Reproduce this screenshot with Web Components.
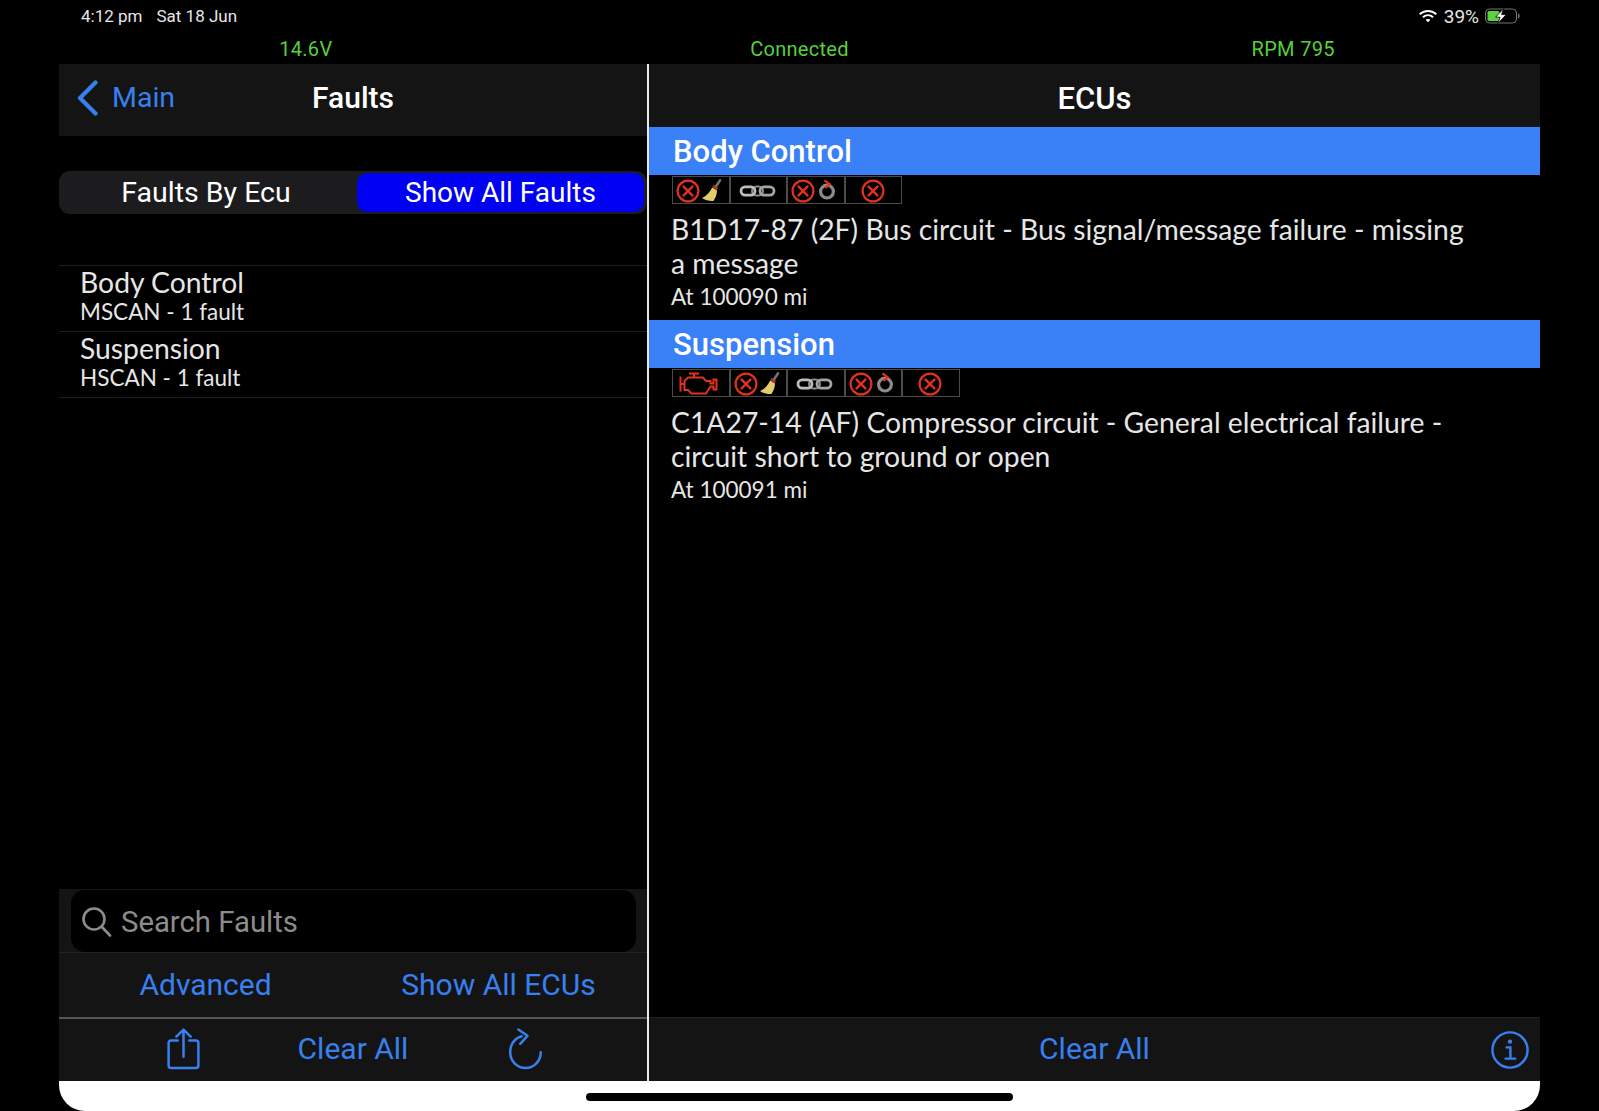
<!DOCTYPE html>
<html lang="en">
<head>
<meta charset="utf-8">
<title>Faults</title>
<style>
html, body { margin: 0; padding: 0; background: #000; }
body { width: 1599px; height: 1111px; overflow: hidden; font-family: Roboto, "Liberation Sans", sans-serif; }
</style>
</head>
<body>
<fault-app></fault-app>

<script>
const RED = '#e0321f';

function crossMark(cx, cy) {
    return `<circle cx="${cx}" cy="${cy}" r="10.4" fill="none" stroke="${RED}" stroke-width="2.2"/>
        <path d="M${cx - 4.4} ${cy - 4.4}L${cx + 4.4} ${cy + 4.4}M${cx + 4.4} ${cy - 4.4}L${cx - 4.4} ${cy + 4.4}" stroke="${RED}" stroke-width="2.4" stroke-linecap="round"/>`;
}

const BROOM = `
    <path d="M49 4.4L44.6 11" stroke="#77746e" stroke-width="2.6" stroke-linecap="round"/>
    <path d="M42 10L46.4 13" stroke="#b5342a" stroke-width="2.6"/>
    <path d="M41.2 11.4L46 14.6C46 18.4 44.4 22.4 42.4 25C38 25.2 34 24.2 31 22C35.4 20 39 16 41.2 11.4Z" fill="#e2cd6a"/>`;

const REDO = `
    <circle cx="41" cy="15.6" r="6.4" fill="none" stroke="#8b8b8b" stroke-width="3.2"/>
    <path d="M38.4 4.4L43.8 8.2L39.4 11.8" fill="none" stroke="${RED}" stroke-width="2.2"/>`;

const CHAIN = `
    <g fill="none" transform="translate(-1 0)">
        <rect x="24" y="10.6" width="11" height="8.8" rx="4.4" stroke="#8f8f8f" stroke-width="2"/>
        <rect x="13" y="10.8" width="14" height="8.4" rx="4.2" stroke="#bdbdbd" stroke-width="2.8"/>
        <rect x="32" y="10.8" width="14" height="8.4" rx="4.2" stroke="#a4a4a4" stroke-width="2.8"/>
    </g>`;

const ENGINE = `
    <path transform="translate(-1 0)" d="M10.5 7.5V22.5M10.5 15H14.5M19 4.5H29M24 4.5V8.5M14.5 12L18 8.5H33L36 12H40.5V14.5H43.5V10.5H46.5V20.5H43.5V17.5H40.5L36 24.5H21.5L18 21H14.5Z" fill="none" stroke="${RED}" stroke-width="2"/>`;

const ICONS = {
    wipe: crossMark(17, 15) + BROOM,
    chain: CHAIN,
    redo: crossMark(17, 15) + REDO,
    cross: crossMark(29, 15),
    engine: ENGINE
};

class DtcFlag extends HTMLElement {
    constructor() {
        super();
        this.attachShadow({ mode: 'open' });
    }

    connectedCallback() {
        const kind = this.getAttribute('kind');
        this.shadowRoot.innerHTML = `
            <style>
            :host { display: block; width: 57.6px; height: 28px; box-sizing: border-box; border: 1px solid #4b4b4b; }
            svg { display: block; margin: -1px -1px -1px -2px; }
            </style>
            <svg width="58" height="28" viewBox="0 0 58 28">${ICONS[kind]}</svg>`;
    }
}

class StatusBar extends HTMLElement {
    constructor() {
        super();
        this.attachShadow({ mode: 'open' });
        this.shadowRoot.innerHTML = `
            <style>
            :host { display: flex; justify-content: space-between; align-items: center; height: 32px; padding: 0 79px 0 81px; color: #e6e6e6; font: 400 17px Roboto, sans-serif; }
            .left { display: flex; gap: 14px; }
            .right { display: flex; align-items: center; gap: 6px; font-size: 19px; }
            </style>
            <div class="left"><span>4:12 pm</span><span>Sat 18 Jun</span></div>
            <div class="right">
                <svg width="20" height="14" viewBox="0 0 19 14" fill="none" stroke="#fff" stroke-width="2">
                    <path d="M1.2 5.2C6 .8 13 .8 17.8 5.2"/>
                    <path d="M4.4 8.3C7.4 5.6 11.6 5.6 14.6 8.3"/>
                    <path d="M9.5 13.2L7 10.8C8.4 9.8 10.6 9.8 12 10.8Z" fill="#fff" stroke="none"/>
                </svg>
                <span>39%</span>
                <svg width="35" height="16" viewBox="0 0 35 16">
                    <rect x=".5" y="1" width="31" height="14" rx="4" fill="none" stroke="#777"/>
                    <rect x="2.5" y="3" width="12" height="10" rx="1.6" fill="#5ed23e"/>
                    <path d="M33 5.5c1.2 .3 1.6 1.2 1.6 2.5s-.4 2.2-1.6 2.5z" fill="#777"/>
                    <path d="M18.5 .6L10.6 9.2H15L13 15.4L21.2 6.6H16.6Z" fill="#fff" stroke="#000" stroke-width=".8"/>
                </svg>
            </div>`;
    }
}

class GaugeBar extends HTMLElement {
    constructor() {
        super();
        this.attachShadow({ mode: 'open' });
        this.shadowRoot.innerHTML = `
            <style>
            :host { display: grid; grid-template-columns: repeat(3, 1fr); height: 32px; padding-top: 2px; box-sizing: border-box; align-items: center; text-align: center; color: #58cf3c; font: 400 20px Roboto, sans-serif; letter-spacing: .3px; }
            </style>
            <span>14.6V</span><span>Connected</span><span>RPM 795</span>`;
    }
}

class NavHeader extends HTMLElement {
    constructor() {
        super();
        this.attachShadow({ mode: 'open' });
        this.shadowRoot.innerHTML = `
            <style>
            :host { display: grid; grid-template-columns: 1fr auto 1fr; align-items: center; height: var(--nav-height, 72px); background: #141414; color: #fff; font: 500 var(--title-size, 30px) Roboto, sans-serif; }
            .back { padding-left: 18px; }
            .title { padding-bottom: var(--title-lift, 5px); padding-top: var(--title-drop, 0); }
            </style>
            <div class="back"><slot name="back"></slot></div>
            <div class="title"><slot></slot></div>
            <div></div>`;
    }
}

class BackLink extends HTMLElement {
    constructor() {
        super();
        this.attachShadow({ mode: 'open' });
        this.shadowRoot.innerHTML = `
            <style>
            :host { display: flex; align-items: center; gap: 13px; padding-bottom: 5px; color: #3880f0; font: 400 28.5px Roboto, sans-serif; }
            svg { display: block; }
            </style>
            <svg width="22" height="36" viewBox="0 0 22 36" fill="none" stroke="#3880f0" stroke-width="4.2" stroke-linecap="round" stroke-linejoin="round">
                <path d="M18.5 2.5L3 18L18.5 33.5"/>
            </svg>
            <slot></slot>`;
    }
}

class SegmentSwitch extends HTMLElement {
    constructor() {
        super();
        this.attachShadow({ mode: 'open' });
        this.shadowRoot.innerHTML = `
            <style>
            :host { display: grid; grid-template-columns: 1fr 287px; height: 43px; margin-top: 35px; border-radius: 11px; background: #1c1c1e; color: #fff; font: 400 28.5px Roboto, sans-serif; padding: 2px 3px; box-sizing: border-box; }
            div { display: flex; justify-content: center; align-items: center; border-radius: 10px; }
            .off { padding-right: 7px; }
            .on { background: #0000f2; font-size: 28px; }
            </style>
            <div class="off">Faults By Ecu</div>
            <div class="on">Show All Faults</div>`;
    }
}

class FaultRow extends HTMLElement {
    constructor() {
        super();
        this.attachShadow({ mode: 'open' });
        this.shadowRoot.innerHTML = `
            <style>
            :host { display: block; box-sizing: border-box; height: 66px; padding: 0 0 0 21px; border-top: 1px solid #1d1d1d; color: #e6e6e6; font-family: Lato, sans-serif; }
            .name { font-size: 28.3px; line-height: 32px; }
            .sub { font-size: 22.5px; line-height: 27px; }
            </style>
            <div class="name"><slot name="name"></slot></div>
            <div class="sub"><slot name="sub"></slot></div>`;
    }
}

class SearchBox extends HTMLElement {
    constructor() {
        super();
        this.attachShadow({ mode: 'open' });
        this.shadowRoot.innerHTML = `
            <style>
            :host { display: block; padding: 1px 11px 0 12px; background: #141414; }
            .field { display: flex; align-items: center; gap: 9px; height: 62px; padding-left: 10px; border-radius: 14px; background: #000; color: #8c8c8c; font: 400 29.3px Roboto, sans-serif; }
            span { padding-top: 2px; }
            svg { display: block; }
            </style>
            <div class="field">
                <svg width="31" height="31" viewBox="0 0 31 31" fill="none" stroke="#8c8c8c" stroke-width="2.6" stroke-linecap="round">
                    <circle cx="13" cy="13" r="10.5"/>
                    <path d="M21 21L29 29.5"/>
                </svg>
                <span><slot></slot></span>
            </div>`;
    }
}

class LinkRow extends HTMLElement {
    constructor() {
        super();
        this.attachShadow({ mode: 'open' });
        this.shadowRoot.innerHTML = `
            <style>
            :host { display: grid; grid-template-columns: 1fr 1fr; justify-items: center; align-items: center; height: 65px; box-sizing: border-box; padding: 0 2px 2px 0; border-top: 1px solid #222; background: #141414; color: #3880f0; font: 400 30px Roboto, sans-serif; }
            </style>
            <slot></slot>`;
    }
}

class ToolBar extends HTMLElement {
    constructor() {
        super();
        this.attachShadow({ mode: 'open' });
        this.shadowRoot.innerHTML = `
            <style>
            :host { display: grid; grid-template-columns: 170px 170px 170px; justify-content: center; justify-items: center; align-items: center; height: 64px; box-sizing: border-box; padding-bottom: 3px; border-top: 2px solid #555; background: #141414; color: #3880f0; font: 400 30px Roboto, sans-serif; }
            svg { display: block; }
            .redo { margin-left: 4px; }
            </style>
            <svg width="35" height="42" viewBox="0 0 36 44" fill="none" stroke="#3880f0" stroke-width="2.6" stroke-linecap="round" stroke-linejoin="round">
                <path d="M12 13H5C3.4 13 2.4 14 2.4 15.6V39.4C2.4 41 3.4 42 5 42H31C32.6 42 33.6 41 33.6 39.4V15.6C33.6 14 32.6 13 31 13H24"/>
                <path d="M18 30V2M10.5 9L18 1.6L25.5 9"/>
            </svg>
            <slot></slot>
            <svg class="redo" width="35" height="42" viewBox="0 0 36 44" fill="none" stroke="#3880f0" stroke-width="2.6" stroke-linecap="round" stroke-linejoin="round">
                <path d="M14 8.6C7 10.4 2 16.6 2 25.4C2 34.4 9 42 18 42C27 42 34 34.4 34 25.4"/>
                <path d="M10.5 1.6L20 8.2L12.5 16.6"/>
            </svg>`;
    }
}

class InfoBar extends HTMLElement {
    constructor() {
        super();
        this.attachShadow({ mode: 'open' });
        this.shadowRoot.innerHTML = `
            <style>
            :host { display: grid; grid-template-columns: 1fr auto 1fr; align-items: center; height: 64px; box-sizing: border-box; padding-bottom: 3px; border-top: 1px solid #222; background: #141414; color: #3880f0; font: 400 30px Roboto, sans-serif; }
            svg { display: block; justify-self: end; margin: 3px 11px 0 0; }
            </style>
            <span></span>
            <slot></slot>
            <svg width="38" height="38" viewBox="0 0 38 38" fill="none" stroke="#3880f0" stroke-linecap="round">
                <circle cx="19" cy="19" r="17.6" stroke-width="2.4"/>
                <circle cx="19" cy="10.6" r="2.2" fill="#3880f0" stroke="none"/>
                <path d="M15.6 16.4H19.4V27.4M14.6 27.6H24.2" stroke-width="2.4"/>
            </svg>`;
    }
}

class EcuSection extends HTMLElement {
    constructor() {
        super();
        this.attachShadow({ mode: 'open' });
        this.shadowRoot.innerHTML = `
            <style>
            :host { display: block; height: 193px; overflow: hidden; }
            .head { height: 48px; padding: 2px 0 0 24px; box-sizing: border-box; background: #3a80f6; color: #fff; font: 500 31px/46px Roboto, sans-serif; }
            .flags { display: flex; padding: 1px 0 0 23px; }
            .code { width: 806px; margin: 8px 0 0 22px; color: #e6e6e6; font: 400 28.3px/34px Lato, sans-serif; }
            .odo { margin: 2px 0 0 22px; color: #e6e6e6; font: 400 22.5px/30px Lato, sans-serif; }
            </style>
            <div class="head"><slot name="title"></slot></div>
            <div class="flags"><slot name="flags"></slot></div>
            <div class="code"><slot name="code"></slot></div>
            <div class="odo"><slot name="odo"></slot></div>`;
    }
}

class FaultApp extends HTMLElement {
    constructor() {
        super();
        this.attachShadow({ mode: 'open' });
        this.shadowRoot.innerHTML = `
            <style>
            :host { display: block; width: 1599px; height: 1111px; }
            .frame { margin: 0 59px; display: flex; flex-direction: column; }
            .panes { display: flex; height: 1017px; }
            .left { width: 588px; display: flex; flex-direction: column; }
            .rows { margin-top: 51px; border-bottom: 1px solid #1d1d1d; }
            .bottom { margin-top: auto; }
            .rule { width: 2px; background: #e8e8e8; }
            .right { flex: 1; display: flex; flex-direction: column; --nav-height: 63px; --title-lift: 0px; --title-drop: 5px; --title-size: 31px; }
            .scroll { flex: 1; }
            .home { display: flex; justify-content: center; height: 30px; margin: 0 59px; background: #fff; border-radius: 0 0 26px 26px; }
            .pill { width: 427px; height: 8px; margin-top: 12px; border-radius: 4px; background: #000; }
            </style>
            <status-bar></status-bar>
            <div class="frame">
                <gauge-bar></gauge-bar>
                <div class="panes">
                    <section class="left">
                        <nav-header><back-link slot="back">Main</back-link>Faults</nav-header>
                        <segment-switch></segment-switch>
                        <div class="rows">
                            <fault-row><span slot="name">Body Control</span><span slot="sub">MSCAN - 1 fault</span></fault-row>
                            <fault-row><span slot="name">Suspension</span><span slot="sub">HSCAN - 1 fault</span></fault-row>
                        </div>
                        <div class="bottom">
                            <search-box>Search Faults</search-box>
                            <link-row><span>Advanced</span><span>Show All ECUs</span></link-row>
                            <tool-bar>Clear All</tool-bar>
                        </div>
                    </section>
                    <div class="rule"></div>
                    <section class="right">
                        <nav-header>ECUs</nav-header>
                        <div class="scroll">
                            <ecu-section>
                                <span slot="title">Body Control</span>
                                <dtc-flag slot="flags" kind="wipe"></dtc-flag>
                                <dtc-flag slot="flags" kind="chain"></dtc-flag>
                                <dtc-flag slot="flags" kind="redo"></dtc-flag>
                                <dtc-flag slot="flags" kind="cross"></dtc-flag>
                                <span slot="code">B1D17-87 (2F) Bus circuit - Bus signal/message failure - missing a message</span>
                                <span slot="odo">At 100090 mi</span>
                            </ecu-section>
                            <ecu-section>
                                <span slot="title">Suspension</span>
                                <dtc-flag slot="flags" kind="engine"></dtc-flag>
                                <dtc-flag slot="flags" kind="wipe"></dtc-flag>
                                <dtc-flag slot="flags" kind="chain"></dtc-flag>
                                <dtc-flag slot="flags" kind="redo"></dtc-flag>
                                <dtc-flag slot="flags" kind="cross"></dtc-flag>
                                <span slot="code">C1A27-14 (AF) Compressor circuit - General electrical failure - circuit short to ground or open</span>
                                <span slot="odo">At 100091 mi</span>
                            </ecu-section>
                        </div>
                        <info-bar>Clear All</info-bar>
                    </section>
                </div>
            </div>
            <div class="home"><div class="pill"></div></div>`;
    }
}

customElements.define('dtc-flag', DtcFlag);
customElements.define('status-bar', StatusBar);
customElements.define('gauge-bar', GaugeBar);
customElements.define('nav-header', NavHeader);
customElements.define('back-link', BackLink);
customElements.define('segment-switch', SegmentSwitch);
customElements.define('fault-row', FaultRow);
customElements.define('search-box', SearchBox);
customElements.define('link-row', LinkRow);
customElements.define('tool-bar', ToolBar);
customElements.define('info-bar', InfoBar);
customElements.define('ecu-section', EcuSection);
customElements.define('fault-app', FaultApp);
</script>
</body>
</html>
